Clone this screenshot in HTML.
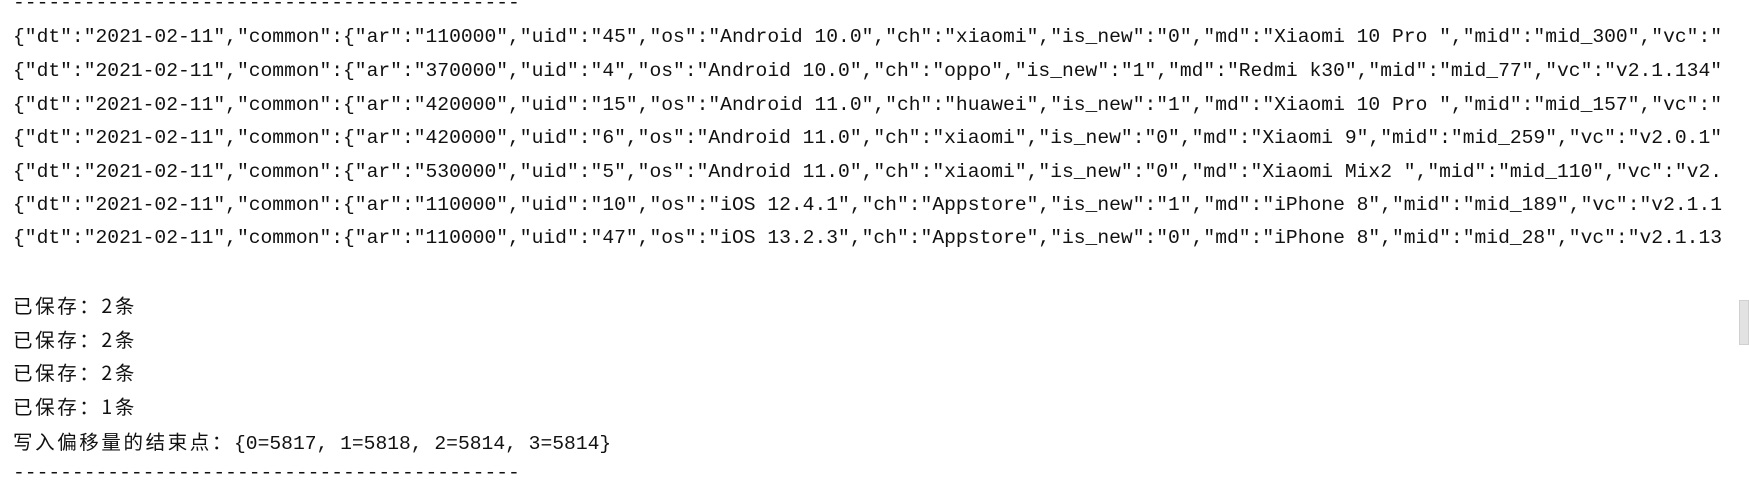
<!DOCTYPE html>
<html><head><meta charset="utf-8"><style>
html,body{margin:0;padding:0;background:#fff;width:1749px;height:482px;overflow:hidden;position:relative}
.l{position:absolute;left:13px;white-space:pre;font-family:"Liberation Mono","Noto Sans CJK SC",monospace;font-size:19.65px;line-height:24px;color:#111}
.c{font-family:"Noto Sans CJK SC","Liberation Sans",sans-serif;font-size:19.5px;letter-spacing:2.6px}
.sb{position:absolute;left:1739px;top:300px;width:10px;height:45px;background:#e2e2e2;border:1px solid #d0d0d0;box-sizing:border-box}
</style></head><body>
<div class="l" style="top:-9px">-------------------------------------------</div>
<div class="l" style="top:25px">{"dt":"2021-02-11","common":{"ar":"110000","uid":"45","os":"Android 10.0","ch":"xiaomi","is_new":"0","md":"Xiaomi 10 Pro ","mid":"mid_300","vc":"</div>
<div class="l" style="top:59px">{"dt":"2021-02-11","common":{"ar":"370000","uid":"4","os":"Android 10.0","ch":"oppo","is_new":"1","md":"Redmi k30","mid":"mid_77","vc":"v2.1.134"</div>
<div class="l" style="top:93px">{"dt":"2021-02-11","common":{"ar":"420000","uid":"15","os":"Android 11.0","ch":"huawei","is_new":"1","md":"Xiaomi 10 Pro ","mid":"mid_157","vc":"</div>
<div class="l" style="top:126px">{"dt":"2021-02-11","common":{"ar":"420000","uid":"6","os":"Android 11.0","ch":"xiaomi","is_new":"0","md":"Xiaomi 9","mid":"mid_259","vc":"v2.0.1"</div>
<div class="l" style="top:160px">{"dt":"2021-02-11","common":{"ar":"530000","uid":"5","os":"Android 11.0","ch":"xiaomi","is_new":"0","md":"Xiaomi Mix2 ","mid":"mid_110","vc":"v2.</div>
<div class="l" style="top:193px">{"dt":"2021-02-11","common":{"ar":"110000","uid":"10","os":"iOS 12.4.1","ch":"Appstore","is_new":"1","md":"iPhone 8","mid":"mid_189","vc":"v2.1.1</div>
<div class="l" style="top:226px">{"dt":"2021-02-11","common":{"ar":"110000","uid":"47","os":"iOS 13.2.3","ch":"Appstore","is_new":"0","md":"iPhone 8","mid":"mid_28","vc":"v2.1.13</div>
<div class="l c" style="top:293px">已保存：2条</div>
<div class="l c" style="top:327px">已保存：2条</div>
<div class="l c" style="top:360px">已保存：2条</div>
<div class="l c" style="top:394px">已保存：1条</div>
<div class="l" style="top:429px"><span class="c">写入偏移量的结束点：</span>{0=5817, 1=5818, 2=5814, 3=5814}</div>
<div class="l" style="top:461px">-------------------------------------------</div>
<div class="sb"></div>
</body></html>
